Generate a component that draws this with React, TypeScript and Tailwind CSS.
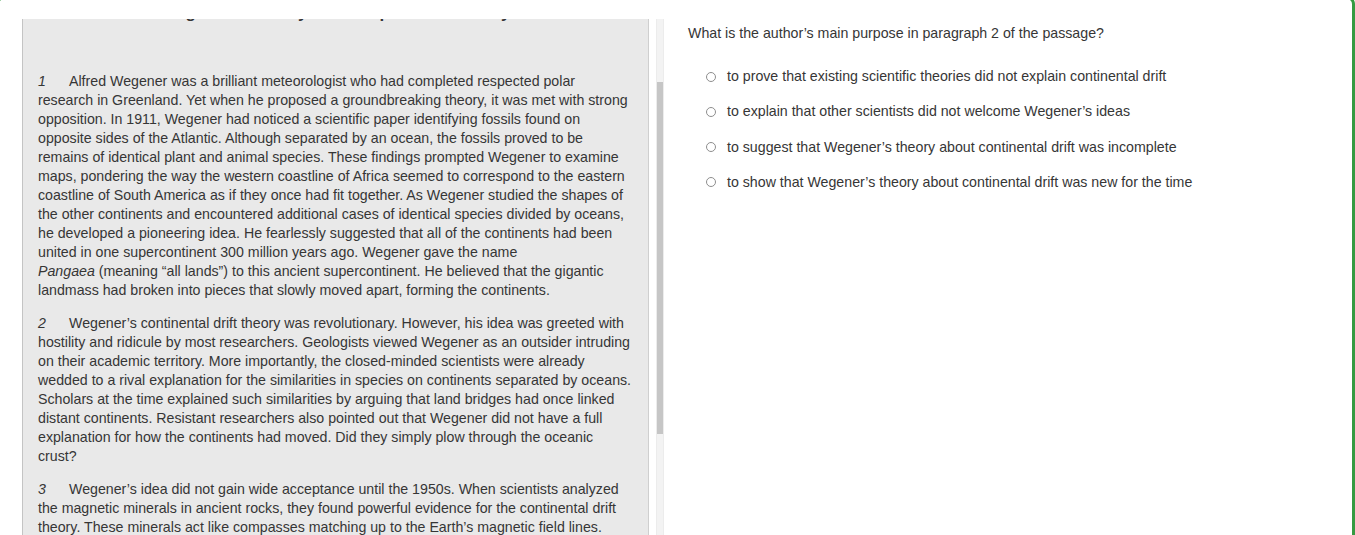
import React from "react";

const P1: React.ReactNode[] = [
  "Alfred Wegener was a brilliant meteorologist who had completed respected polar",
  "research in Greenland. Yet when he proposed a groundbreaking theory, it was met with strong",
  "opposition. In 1911, Wegener had noticed a scientific paper identifying fossils found on",
  "opposite sides of the Atlantic. Although separated by an ocean, the fossils proved to be",
  "remains of identical plant and animal species. These findings prompted Wegener to examine",
  "maps, pondering the way the western coastline of Africa seemed to correspond to the eastern",
  "coastline of South America as if they once had fit together. As Wegener studied the shapes of",
  "the other continents and encountered additional cases of identical species divided by oceans,",
  "he developed a pioneering idea. He fearlessly suggested that all of the continents had been",
  "united in one supercontinent 300 million years ago. Wegener gave the name",
  <>
    <i>Pangaea</i> (meaning “all lands”) to this ancient supercontinent. He believed that the gigantic
  </>,
  "landmass had broken into pieces that slowly moved apart, forming the continents.",
];

const P2: React.ReactNode[] = [
  "Wegener’s continental drift theory was revolutionary. However, his idea was greeted with",
  "hostility and ridicule by most researchers. Geologists viewed Wegener as an outsider intruding",
  "on their academic territory. More importantly, the closed-minded scientists were already",
  "wedded to a rival explanation for the similarities in species on continents separated by oceans.",
  "Scholars at the time explained such similarities by arguing that land bridges had once linked",
  "distant continents. Resistant researchers also pointed out that Wegener did not have a full",
  "explanation for how the continents had moved. Did they simply plow through the oceanic",
  "crust?",
];

const P3: React.ReactNode[] = [
  "Wegener’s idea did not gain wide acceptance until the 1950s. When scientists analyzed",
  "the magnetic minerals in ancient rocks, they found powerful evidence for the continental drift",
  "theory. These minerals act like compasses matching up to the Earth’s magnetic field lines.",
];

const options = [
  "to prove that existing scientific theories did not explain continental drift",
  "to explain that other scientists did not welcome Wegener’s ideas",
  "to suggest that Wegener’s theory about continental drift was incomplete",
  "to show that Wegener’s theory about continental drift was new for the time",
];

function Para({ n, lines, last }: { n: string; lines: React.ReactNode[]; last?: boolean }) {
  return (
    <p className={"whitespace-nowrap " + (last ? "" : "mb-[14px]")}>
      <i className="inline-block w-[31px]">{n}</i>
      {lines.map((l, i) => (
        <React.Fragment key={i}>
          {i > 0 && <br />}
          {l}
        </React.Fragment>
      ))}
    </p>
  );
}

export default function App() {
  return (
    <div
      className="w-[1355px] h-[535px] overflow-hidden bg-white text-[#363636]"
      style={{ fontFamily: '"Liberation Sans", Arial, sans-serif' }}
    >
      <div className="-mt-[4px] -ml-[4px] w-[1359px] h-[700px] border-[3px] border-[#359b41] rounded-lg flex pt-[20px] pl-[23px]">
        <div className="w-[627px] h-[660px] shrink-0 bg-[#e9e9e9] border-l border-l-[#c4c4c4] border-r border-r-[#cfcfcf] overflow-hidden px-[15px] text-[14.2px] leading-[19px]">
          <div className="-mt-[18px] mb-[47px] text-center text-[17px] leading-[24px] font-semibold whitespace-nowrap">
            Wegener’s Theory Was Proposed Too Early
          </div>
          <Para n="1" lines={P1} />
          <Para n="2" lines={P2} />
          <Para n="3" lines={P3} last />
        </div>
        <div className="ml-[7px] w-[8px] h-[660px] shrink-0 bg-[#f3f3f3] border-x border-[#ececec]">
          <div className="mt-[63px] h-[352px] bg-[#c6c6c6]" />
        </div>
        <div className="flex-1 pl-[24px] pt-[5px] text-[14.2px] leading-[19px]">
          <div>What is the author’s main purpose in paragraph 2 of the passage?</div>
          <div className="mt-[24px] flex flex-col gap-[16.33px]">
            {options.map((o) => (
              <div key={o} className="flex items-center ml-[18px]">
                <span className="w-[10px] h-[10px] rounded-full border border-[#8e8e8e] bg-white shrink-0" />
                <span className="ml-[11px]">{o}</span>
              </div>
            ))}
          </div>
        </div>
      </div>
    </div>
  );
}
